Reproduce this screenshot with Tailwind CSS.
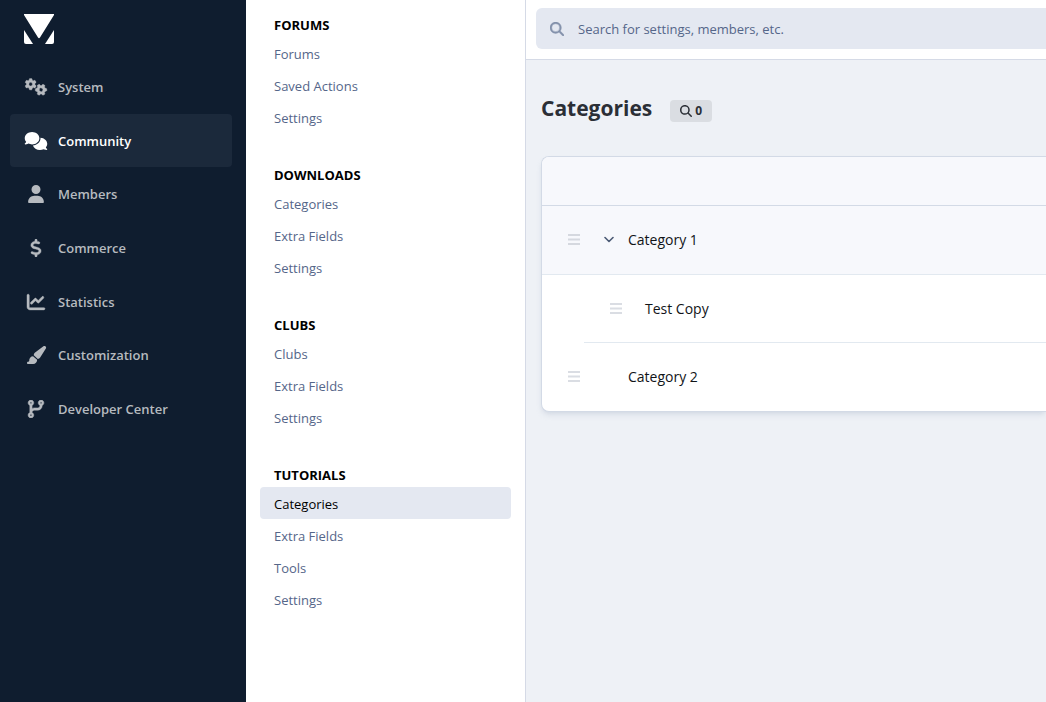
<!DOCTYPE html>
<html lang="en">

<head>
    <meta charset="UTF-8">
    <meta name="viewport" content="width=device-width, initial-scale=1.0">
    <script src="https://cdn.jsdelivr.net/npm/@tailwindcss/browser@4"></script>
    <title>Categories</title>
</head>

<body class="flex min-h-screen overflow-x-hidden bg-[#eef1f6] font-['Open_Sans','Noto_Sans',sans-serif] text-[13px]">
    <!-- Main navigation -->
    <aside class="w-[246px] shrink-0 bg-[#0f1d2f]">
        <a href="#" class="flex h-15 items-center px-6 pb-0.5" aria-label="Home">
            <svg class="size-[30px] fill-white" viewBox="0 0 30 30">
                <path d="M0 0H30V1L16 23.4Q15 25 14 23.4L0 1Z" />
                <path d="M0 16L9 30H2Q0 30 0 28Z" />
                <path d="M30 16L21 30H28Q30 30 30 28Z" />
            </svg>
        </a>
        <nav class="grid h-94 grid-rows-7 pl-2.5 pr-3.5 leading-[22px] font-semibold text-[#b6babf]">
            <a href="#" class="flex items-center gap-2.5 rounded px-[14px]">
                <svg class="h-[18px] w-6 fill-current" viewBox="0 0 24 18">
                    <defs>
                        <path id="gear" fill-rule="evenodd" d="M495.9 166.6c3.2 8.7 .5 18.4-6.4 24.6l-43.3 39.4c1.1 8.3 1.7 16.8 1.7 25.4s-.6 17.1-1.7 25.4l43.3 39.4c6.9 6.2 9.6 15.9 6.4 24.6c-4.4 11.9-9.7 23.3-15.8 34.3l-4.7 8.1c-6.6 11-14 21.4-22.1 31.2c-5.9 7.2-15.7 9.6-24.5 6.8l-55.7-17.7c-13.4 10.3-28.2 18.9-44 25.4l-12.5 57.1c-2 9.1-9 16.3-18.2 17.8c-13.8 2.3-28 3.5-42.5 3.5s-28.7-1.2-42.5-3.5c-9.2-1.5-16.2-8.7-18.2-17.8l-12.5-57.1c-15.8-6.5-30.6-15.1-44-25.4L83.1 425.9c-8.8 2.8-18.6 .3-24.5-6.8c-8.1-9.8-15.5-20.2-22.1-31.2l-4.7-8.1c-6.1-11-11.4-22.4-15.8-34.3c-3.2-8.7-.5-18.4 6.4-24.6l43.3-39.4C64.6 273.1 64 264.6 64 256s.6-17.1 1.7-25.4L22.4 191.2c-6.9-6.2-9.6-15.9-6.4-24.6c4.4-11.9 9.7-23.3 15.8-34.3l4.7-8.1c6.6-11 14-21.4 22.1-31.2c5.9-7.2 15.7-9.6 24.5-6.8l55.7 17.7c13.4-10.3 28.2-18.9 44-25.4l12.5-57.1c2-9.1 9-16.3 18.2-17.8C227.3 1.2 241.5 0 256 0s28.7 1.2 42.5 3.5c9.2 1.5 16.2 8.7 18.2 17.8l12.5 57.1c15.8 6.5 30.6 15.1 44 25.4l55.7-17.7c8.8-2.8 18.6-.3 24.5 6.8c8.1 9.8 15.5 20.2 22.1 31.2l4.7 8.1c6.1 11 11.4 22.4 15.8 34.3zM256 336a80 80 0 1 0 0-160 80 80 0 1 0 0 160z" />
                    </defs>
                    <g class="stroke-current stroke-[16]">
                        <use href="#gear" transform="translate(.9 .4) scale(.0225)" />
                        <use href="#gear" transform="translate(11.3 6) scale(.0225) rotate(30 256 256)" />
                    </g>
                </svg>
                System
            </a>
            <a href="#" class="flex items-center gap-2.5 rounded bg-[#1b293b] px-[14px] text-white" aria-current="page">
                <svg class="h-[18px] w-6 fill-current" viewBox="-16 0 672 512">
                    <path d="M208 352c114.9 0 208-78.8 208-176S322.9 0 208 0S0 78.8 0 176c0 38.6 14.7 74.3 39.6 103.4c-3.5 9.4-8.7 17.7-14.2 24.7c-4.8 6.2-9.7 11-13.3 14.3c-1.8 1.6-3.3 2.9-4.3 3.7c-.5 .4-.9 .7-1.1 .8l-.2 .2C1 327.2-1.4 334.4 .8 340.9S9.1 352 16 352c21.8 0 43.8-5.6 62.1-12.5c9.2-3.5 17.8-7.4 25.2-11.4C134.1 343.3 169.8 352 208 352zM448 176c0 112.3-99.1 196.9-216.5 207C255.8 457.4 336.4 512 432 512c38.2 0 73.9-8.7 104.7-23.9c7.5 4 16 7.9 25.2 11.4c18.3 6.9 40.3 12.5 62.1 12.5c6.9 0 13.1-4.5 15.2-11.1c2.1-6.6-.2-13.8-5.8-17.9l-.2-.2c-.2-.2-.6-.4-1.1-.8c-1-.8-2.5-2-4.3-3.7c-3.6-3.3-8.5-8.1-13.3-14.3c-5.5-7-10.7-15.4-14.2-24.7c24.9-29 39.6-64.7 39.6-103.4c0-92.8-84.9-168.9-192.6-175.5c.4 5.1 .6 10.3 .6 15.5z" />
                </svg>
                Community
            </a>
            <a href="#" class="flex items-center gap-2.5 rounded px-[14px]">
                <svg class="h-[18px] w-6 fill-current" viewBox="0 0 448 512">
                    <path d="M224 256A128 128 0 1 0 224 0a128 128 0 1 0 0 256zm-45.7 48C79.8 304 0 383.8 0 482.3C0 498.7 13.3 512 29.7 512H418.3c16.4 0 29.7-13.3 29.7-29.7C448 383.8 368.2 304 269.7 304H178.3z" />
                </svg>
                Members
            </a>
            <a href="#" class="flex items-center gap-2.5 rounded px-[14px]">
                <svg class="h-[18px] w-6 fill-current stroke-current stroke-[12]" viewBox="0 0 320 512">
                    <path d="M160 0c17.7 0 32 14.3 32 32V67.7c1.6 .2 3.1 .4 4.7 .7c.4 .1 .7 .1 1.1 .2l48 8.8c17.4 3.2 28.9 19.9 25.7 37.2s-19.9 28.9-37.2 25.7l-47.5-8.7c-31.3-4.6-58.9-1.5-78.3 6.2s-27.2 18.3-29 28.1c-2 10.7-.5 16.7 1.2 20.4c1.8 3.9 5.5 8.3 12.8 13.2c16.3 10.7 41.3 17.7 73.7 26.3l2.9 .8c28.6 7.6 63.6 16.8 89.6 33.8c14.2 9.3 27.6 21.9 35.9 39.5c8.5 17.9 10.3 37.9 6.4 59.2c-6.9 38-33.1 63.4-65.6 76.7c-13.7 5.6-28.6 9.2-44.4 11V480c0 17.7-14.3 32-32 32s-32-14.3-32-32V445.1c-.4-.1-.9-.1-1.3-.2l-.2 0 0 0c-24.4-3.8-64.5-14.3-91.5-26.3c-16.1-7.2-23.4-26.1-16.2-42.2s26.1-23.4 42.2-16.2c20.9 9.3 55.3 18.5 75.2 21.6c31.9 4.7 58.2 2 76-5.3c16.9-6.9 24.6-16.9 26.8-28.9c1.9-10.6 .4-16.7-1.3-20.4c-1.9-4-5.6-8.4-13-13.3c-16.4-10.7-41.5-17.7-74-26.3l-2.8-.7 0 0C119.4 279.3 84.4 270 58.4 253c-14.2-9.3-27.5-22-35.8-39.6c-8.4-17.9-10.1-37.9-6.1-59.2C23.7 116 52.3 91.2 84.8 78.3c13.3-5.3 27.9-8.9 43.2-11V32c0-17.7 14.3-32 32-32z" />
                </svg>
                Commerce
            </a>
            <a href="#" class="flex items-center gap-2.5 rounded px-[14px]">
                <svg class="h-[18px] w-6 fill-current stroke-current stroke-[12]" viewBox="0 0 512 512">
                    <path d="M64 64c0-17.7-14.3-32-32-32S0 46.3 0 64V400c0 44.2 35.8 80 80 80H480c17.7 0 32-14.3 32-32s-14.3-32-32-32H80c-8.8 0-16-7.2-16-16V64zm406.6 86.6c12.5-12.5 12.5-32.8 0-45.3s-32.8-12.5-45.3 0L320 210.7l-57.4-57.4c-12.5-12.5-32.8-12.5-45.3 0l-112 112c-12.5 12.5-12.5 32.8 0 45.3s32.8 12.5 45.3 0L240 221.3l57.4 57.4c12.5 12.5 32.8 12.5 45.3 0l128-128z" />
                </svg>
                Statistics
            </a>
            <a href="#" class="flex items-center gap-2.5 rounded px-[14px]">
                <svg class="h-[18px] w-6 fill-current" viewBox="0 0 576 512">
                    <path d="M339.3 367.1c27.3-3.9 51.9-19.4 67.2-42.9L568.2 74.1c12.6-19.5 9.4-45.3-7.6-61.2S517.7-4.4 499.1 9.6L262.4 187.2c-24 18-38.2 46.1-38.4 76.1L339.3 367.1zm-19.6 25.4l-116-104.4C143.9 290.3 96 339.6 96 400c0 3.9 .2 7.8 .6 11.6C98.4 429.1 86.4 448 68.8 448H64c-17.7 0-32 14.3-32 32s14.3 32 32 32H208c61.9 0 112-50.1 112-112c0-2.5-.1-5-.2-7.5z" />
                </svg>
                Customization
            </a>
            <a href="#" class="flex items-center gap-2.5 rounded px-[14px]">
                <svg class="h-[18px] w-6 fill-current stroke-current stroke-[14]" viewBox="0 0 448 512">
                    <path fill-rule="evenodd" d="M80 104a24 24 0 1 0 0-48 24 24 0 1 0 0 48zm80-24c0 32.8-19.7 61-48 73.3v87.8c18.8-10.9 40.7-17.1 64-17.1h96c35.3 0 64-28.7 64-64v-6.7C307.7 141 288 112.8 288 80c0-44.2 35.8-80 80-80s80 35.8 80 80c0 32.8-19.7 61-48 73.3V160c0 70.7-57.3 128-128 128H176c-35.3 0-64 28.7-64 64v6.7c28.3 12.3 48 40.5 48 73.3c0 44.2-35.8 80-80 80s-80-35.8-80-80c0-32.8 19.7-61 48-73.3V352 153.3C19.7 141 0 112.8 0 80C0 35.8 35.8 0 80 0s80 35.8 80 80zm232 0a24 24 0 1 0-48 0 24 24 0 1 0 48 0zM80 456a24 24 0 1 0 0-48 24 24 0 1 0 0 48z" />
                </svg>
                Developer Center
            </a>
        </nav>
    </aside>

    <!-- Section navigation -->
    <nav class="flex w-[280px] shrink-0 flex-col gap-[30px] border-r border-[#d5dae6] bg-white px-[14px] pt-[13px] text-[#556689]">
        <section>
            <h2 class="px-[14px] leading-6 font-bold text-black uppercase">Forums</h2>
            <a href="#" class="block h-8 rounded px-[14px] leading-[34px]">Forums</a>
            <a href="#" class="block h-8 rounded px-[14px] leading-[34px]">Saved Actions</a>
            <a href="#" class="block h-8 rounded px-[14px] leading-[34px]">Settings</a>
        </section>
        <section>
            <h2 class="px-[14px] leading-6 font-bold text-black uppercase">Downloads</h2>
            <a href="#" class="block h-8 rounded px-[14px] leading-[34px]">Categories</a>
            <a href="#" class="block h-8 rounded px-[14px] leading-[34px]">Extra Fields</a>
            <a href="#" class="block h-8 rounded px-[14px] leading-[34px]">Settings</a>
        </section>
        <section>
            <h2 class="px-[14px] leading-6 font-bold text-black uppercase">Clubs</h2>
            <a href="#" class="block h-8 rounded px-[14px] leading-[34px]">Clubs</a>
            <a href="#" class="block h-8 rounded px-[14px] leading-[34px]">Extra Fields</a>
            <a href="#" class="block h-8 rounded px-[14px] leading-[34px]">Settings</a>
        </section>
        <section>
            <h2 class="px-[14px] leading-6 font-bold text-black uppercase">Tutorials</h2>
            <a href="#" class="block h-8 rounded bg-[#e4e8f1] px-[14px] leading-[34px] font-medium text-black" aria-current="page">Categories</a>
            <a href="#" class="block h-8 rounded px-[14px] leading-[34px]">Extra Fields</a>
            <a href="#" class="block h-8 rounded px-[14px] leading-[34px]">Tools</a>
            <a href="#" class="block h-8 rounded px-[14px] leading-[34px]">Settings</a>
        </section>
    </nav>

    <div class="min-w-0 flex-1">
        <header class="border-b border-[#d5dae6] bg-white pt-2 pb-2.5 pl-2.5">
            <label class="flex h-[41px] items-center gap-[14px] rounded-l-md bg-[#e4e8f1] pl-[14px]">
                <svg class="size-[14px] shrink-0 fill-[#8391ab] stroke-[#8391ab] stroke-[14]" viewBox="0 0 512 512">
                    <path d="M416 208c0 45.9-14.9 88.3-40 122.7L502.6 457.4c12.5 12.5 12.5 32.8 0 45.3s-32.8 12.5-45.3 0L330.7 376c-34.4 25.2-76.8 40-122.7 40C93.1 416 0 322.9 0 208S93.1 0 208 0S416 93.1 416 208zM208 352a144 144 0 1 0 0-288 144 144 0 1 0 0 288z" />
                </svg>
                <input type="search" aria-label="Search" placeholder="Search for settings, members, etc."
                    class="min-w-0 flex-1 pt-0.5 outline-none placeholder:text-[#556689]">
            </label>
        </header>

        <main class="pl-[15px]">
            <div class="flex h-24 items-center gap-[18px] pt-0.5">
                <h1 class="text-[21px] font-bold text-[#2b2f36]">Categories</h1>
                <button type="button" class="mt-1 flex h-[22px] items-center gap-[3px] rounded bg-[#dadde2] px-2.5 text-xs font-bold text-[#2b2f36]">
                    <svg class="size-3 fill-current" viewBox="0 0 512 512">
                        <path d="M416 208c0 45.9-14.9 88.3-40 122.7L502.6 457.4c12.5 12.5 12.5 32.8 0 45.3s-32.8 12.5-45.3 0L330.7 376c-34.4 25.2-76.8 40-122.7 40C93.1 416 0 322.9 0 208S93.1 0 208 0S416 93.1 416 208zM208 352a144 144 0 1 0 0-288 144 144 0 1 0 0 288z" />
                    </svg>
                    0
                </button>
            </div>

            <!-- Category tree -->
            <div class="overflow-hidden rounded-l-lg border border-r-0 border-[#d3dae6] bg-white text-sm text-[#111418] shadow-md shadow-slate-400/20">
                <div class="h-[49px] border-b border-[#d3dae6] bg-[#f7f8fc]"></div>
                <ul>
                    <li>
                        <div class="flex h-[69px] items-center border-b border-[#e2e9f0] bg-[#f7f8fc] pl-[26px]">
                            <button type="button" aria-label="Move Category 1" class="w-9 text-[#d5d8df]">
                                <svg class="h-3 w-3 stroke-current stroke-2" viewBox="0 0 12 12">
                                    <path d="M0 1H12M0 5.5H12M0 10H12" />
                                </svg>
                            </button>
                            <button type="button" aria-label="Collapse Category 1" class="w-6 text-[#4b5a75]">
                                <svg class="h-3 w-[10px] fill-none stroke-current" viewBox="0 0 10 12">
                                    <path stroke-width="1.6" stroke-linecap="round" stroke-linejoin="round" d="M1 3.5L5 7.5L9 3.5" />
                                </svg>
                            </button>
                            <a href="#">Category 1</a>
                        </div>
                        <ul class="pl-[42px]">
                            <li class="flex h-[68px] items-center border-b border-[#e2e9f0] pl-[26px]">
                                <button type="button" aria-label="Move Test Copy" class="w-[35px] text-[#dadde3]">
                                    <svg class="h-3 w-3 stroke-current stroke-2" viewBox="0 0 12 12">
                                        <path d="M0 1H12M0 5.5H12M0 10H12" />
                                    </svg>
                                </button>
                                <a href="#">Test Copy</a>
                            </li>
                        </ul>
                    </li>
                    <li class="flex h-[68px] items-center pl-[26px]">
                        <button type="button" aria-label="Move Category 2" class="w-15 text-[#dadde3]">
                            <svg class="h-3 w-3 stroke-current stroke-2" viewBox="0 0 12 12">
                                <path d="M0 1H12M0 5.5H12M0 10H12" />
                            </svg>
                        </button>
                        <a href="#">Category 2</a>
                    </li>
                </ul>
            </div>
        </main>
    </div>
</body>

</html>
